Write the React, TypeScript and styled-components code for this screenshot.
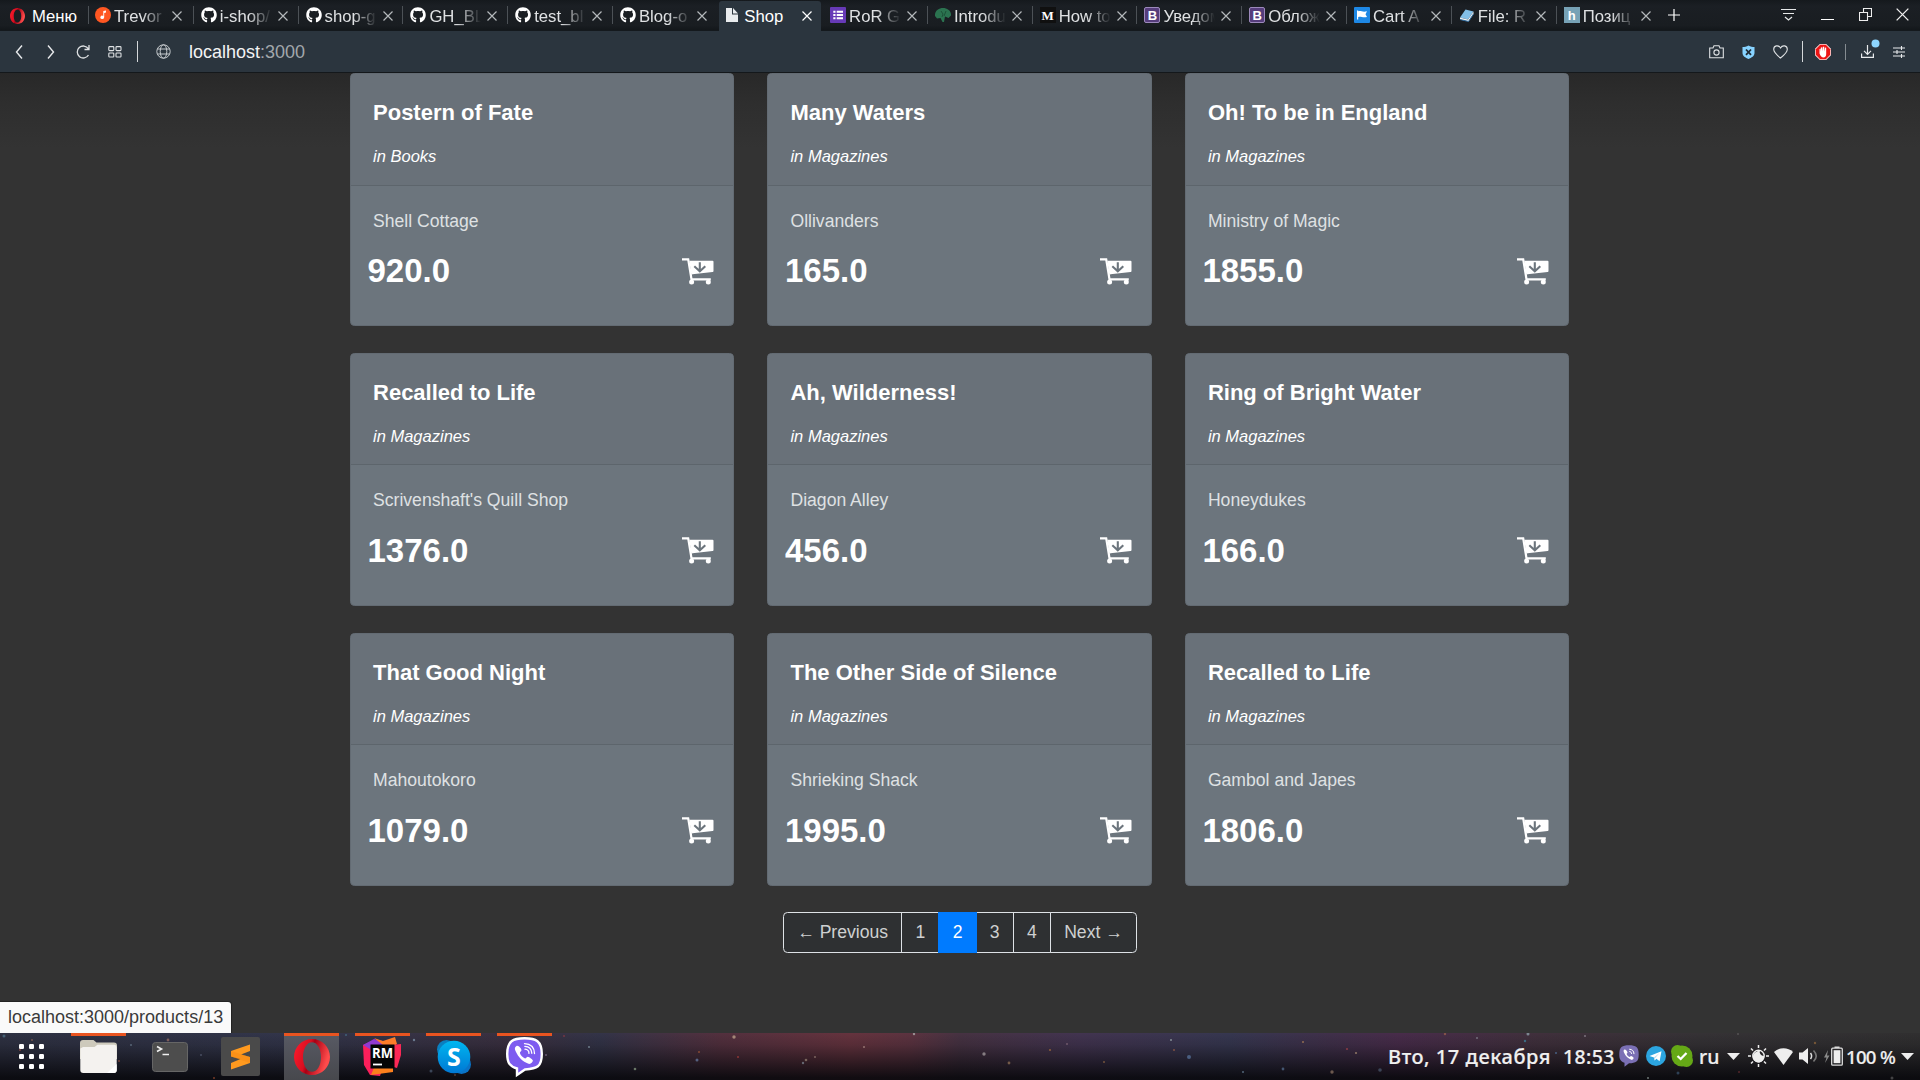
import React from 'react';
import styled, { createGlobalStyle, css } from 'styled-components';
import { FaGithub } from 'react-icons/fa';

const GlobalStyle = createGlobalStyle`
  *, *::before, *::after { box-sizing: border-box; }
  body {
    margin: 0;
    background: #333;
    font-family: "Liberation Sans", Arial, sans-serif;
    overflow: hidden;
  }
  svg { display: block; flex: none; }
`;

const Screen = styled.div`
  width: 1920px;
  height: 1080px;
  display: flex;
  flex-direction: column;
  overflow: hidden;
`;

/* ---------- tab strip ---------- */

const TabStrip = styled.div`
  height: 31px;
  flex: none;
  display: flex;
  background: linear-gradient(#15191d, #1b1f24 20%, #191d21 85%, #13171a);
  border-bottom: 1px solid #14191d;
  color: #dfe1e3;
  font-size: 16.7px;
  line-height: 33px;
`;

const MenuButton = styled.div`
  width: 88px;
  display: flex;
  align-items: center;
  padding-left: 10px;
  gap: 7px;
  color: #fff;
  height: 32px;
`;

const Tab = styled.div<{ $active?: boolean; $plain?: boolean; $first?: boolean }>`
  width: 104.8px;
  flex: none;
  display: flex;
  align-items: center;
  height: 31px;
  padding-left: ${p => (p.$first ? 6 : 7)}px;
  border-left: 1px solid transparent;
  border-image: linear-gradient(transparent 7px, ${p => (p.$plain ? 'transparent' : '#4c5156')} 7px, ${p => (p.$plain ? 'transparent' : '#4c5156')} 23px, transparent 23px) 1;
  ${p => p.$active && css`
    width: 101.8px;
    margin: 1px 1.5px 0 2px;
    height: 30px;
    padding: 0 0 1px 6.5px;
    border: 0;
    border-radius: 3px 3px 0 0;
    background: #2b353e;
    color: #fff;
  `}
`;

const Favicon = styled.span`
  width: 16px;
  height: 16px;
  flex: none;
  margin-top: -1px;
`;

const TabTitle = styled.span<{ $full?: boolean }>`
  width: 52px;
  margin-left: 3px;
  height: 31px;
  line-height: 33px;
  flex: none;
  overflow: hidden;
  white-space: nowrap;
  ${p => !p.$full && css`mask-image: linear-gradient(90deg, #000 55%, transparent 100%);`}
`;

const TabClose = styled.span`
  margin-left: 6px;
`;

const LetterIcon = styled.span<{ $bg: string; $serif?: boolean; $edge?: string }>`
  display: flex;
  align-items: center;
  justify-content: center;
  width: 16px;
  height: 16px;
  background: ${p => p.$bg};
  border: ${p => (p.$edge ? `1px solid ${p.$edge}` : '0')};
  border-radius: ${p => (p.$edge ? '2px' : '0')};
  color: #fff;
  font: bold 13px/15px ${p => (p.$serif ? '"Liberation Serif", serif' : '"Liberation Sans", sans-serif')};
`;

const NewTab = styled.div`
  width: 27px;
  display: flex;
  align-items: center;
  justify-content: center;
  height: 29px;
  margin-right: auto;
`;

const WindowButton = styled.div<{ $w: number }>`
  width: ${p => p.$w}px;
  height: 28px;
  display: flex;
  align-items: center;
  justify-content: center;
`;

/* ---------- address bar ---------- */

const Toolbar = styled.div`
  height: 42px;
  flex: none;
  display: flex;
  align-items: center;
  padding: 0 4px 0 3px;
  background: #2b353e;
  border-bottom: 1px solid #14181b;
  z-index: 1;
`;

const ToolSlot = styled.div<{ $w?: number }>`
  width: ${p => p.$w ?? 32}px;
  height: 22px;
  display: flex;
  align-items: center;
  justify-content: center;
`;

const ToolRule = styled.span<{ $h: number; $c?: string }>`
  width: 1px;
  height: ${p => p.$h}px;
  background: ${p => p.$c ?? '#d5d8da'};
`;

const Address = styled.div`
  flex: 1;
  margin-left: 6px;
  padding-top: 1px;
  font-size: 18px;
  color: #f2f3f4;
  span { color: #a2a7ab; }
`;

/* ---------- page ---------- */

const Page = styled.main`
  height: 960px;
  flex: none;
  display: flex;
  flex-direction: column;
  align-items: center;
  padding-top: 0.2px;
  background: linear-gradient(#282828, #2e2e2e 30px, #333 75px);
`;

const ProductGrid = styled.div`
  display: grid;
  grid-template-columns: repeat(3, 384.2px);
  grid-auto-rows: 253px;
  column-gap: 33.25px;
  row-gap: 26.7px;
  padding-right: 0.9px;
`;

const Card = styled.article`
  background: #6c757d;
  border: 1px solid #636b73;
  border-radius: 4.4px;
  overflow: hidden;
`;

const CardHeader = styled.header`
  height: 111.4px;
  background: #697179;
  border-bottom: 1px solid #5d656c;
  padding: 26px 22px 0;
  color: #fff;
`;

const Title = styled.h5`
  margin: 0;
  font-size: 22px;
  line-height: 26px;
  font-weight: bold;
`;

const Category = styled.p`
  margin: 18px 0 0;
  font-size: 16.5px;
  line-height: 25px;
  font-style: italic;
`;

const CardBody = styled.div`
  padding: 22.05px 19px 0 16.5px;
`;

const Maker = styled.p`
  margin: 0 0 0 5.5px;
  font-size: 17.6px;
  line-height: 26px;
  color: #dfe1e3;
`;

const PriceRow = styled.div`
  margin-top: 17.55px;
  height: 40px;
  display: flex;
  align-items: center;
  justify-content: space-between;
`;

const Price = styled.strong`
  font-size: 33px;
  line-height: 40px;
  color: #fff;
`;

const Pager = styled.nav`
  display: flex;
  margin-top: 26.4px;
  padding-left: 1px;
`;

const PageLink = styled.a<{ $active?: boolean }>`
  height: 41px;
  padding: 0 13.2px;
  margin-left: -1px;
  border: 1px solid ${p => (p.$active ? '#007bff' : '#dee2e6')};
  background: ${p => (p.$active ? '#007bff' : '#2e3032')};
  color: ${p => (p.$active ? '#fff' : '#ced0d1')};
  z-index: ${p => (p.$active ? 1 : 0)};
  font-size: 17.6px;
  line-height: 39px;
  white-space: nowrap;
  &:first-child { border-radius: 4.4px 0 0 4.4px; }
  &:last-child { border-radius: 0 4.4px 4.4px 0; }
`;

const LinkStatus = styled.div`
  position: absolute;
  left: 0;
  top: 1002px;
  width: 231px;
  height: 31px;
  padding-left: 8px;
  border-radius: 0 3px 0 0;
  box-shadow: 0 0 1px 1px #222;
  background: #fafafa;
  color: #3a3a3a;
  font-size: 18px;
  line-height: 30px;
`;

/* ---------- desktop panel ---------- */

const Panel = styled.footer`
  position: relative;
  height: 47px;
  flex: none;
  display: flex;
  z-index: 2;
  background:
    linear-gradient(rgba(8, 8, 12, 0), rgba(8, 8, 12, 0.15) 25%, rgba(8, 8, 12, 0.9) 95%),
    linear-gradient(90deg, #2e3142 0, #32354a 300px, #3b3040 520px, #333448 600px, #53303e 720px, #65333e 850px, #5c3340 910px, #463242 960px, #423450 1080px, #363750 1230px, #40304a 1330px, #482c4a 1400px, #40303c 1540px, #353235 1700px, #302f30 1920px);
`;

const StarField = styled.svg`
  position: absolute;
  inset: 0;
  opacity: 0.75;
`;

const DockItem = styled.div<{ $running?: boolean; $focused?: boolean; $w?: number }>`
  position: relative;
  width: ${p => p.$w ?? 55}px;
  margin-right: ${p => (p.$w ? 8 : 16)}px;
  display: flex;
  align-items: center;
  justify-content: center;
  padding-bottom: 3px;
  border-top: 3px solid ${p => (p.$running ? '#e95420' : 'transparent')};
  background: ${p => (p.$focused ? 'linear-gradient(#575963, #47484d)' : 'none')};
  background-clip: padding-box;
  svg { overflow: visible; }
`;

const Tray = styled.div`
  position: relative;
  margin-left: auto;
  padding-right: 6px;
  display: flex;
  align-items: center;
  color: #f0f0f0;
  font: 500 19.4px/47px "Noto Sans", "Open Sans", sans-serif;
`;

const TrayText = styled.span<{ $w: number; $gap: number; $ls?: number; $size?: number }>`
  width: ${p => p.$w}px;
  margin-right: ${p => p.$gap}px;
  letter-spacing: ${p => p.$ls ?? 0}px;
  font-size: ${p => p.$size ?? 19.4}px;
  white-space: nowrap;
  -webkit-text-stroke: 0.2px #f0f0f0;
`;

const TrayIcon = styled.span<{ $gap: number }>`
  margin-right: ${p => p.$gap}px;
  margin-top: -1px;
`;

/* ---------- drawings ---------- */

const Cross = ({ size = 10, color = '#b4b8bb', w = 1.2 }: { size?: number; color?: string; w?: number }) => (
  <svg width={size} height={size} viewBox="0 0 10 10" stroke={color} strokeWidth={w}>
    <path d="M.5 .5 9.5 9.5M9.5 .5 .5 9.5" />
  </svg>
);

const OperaMark = ({ w, h, id }: { w: number; h: number; id: string }) => (
  <svg width={w} height={h} viewBox="0 0 36 40" preserveAspectRatio="none">
    <defs>
      <linearGradient id={id} x1="0" y1="0" x2="1" y2="0.3">
        <stop offset="0" stopColor="#ff1b2d" />
        <stop offset=".45" stopColor="#d80f20" />
        <stop offset=".55" stopColor="#a70014" />
        <stop offset="1" stopColor="#ff4b4b" />
      </linearGradient>
    </defs>
    <path fill={`url(#${id})`} fillRule="evenodd" d="M18 0C8 0 0 9 0 20s8 20 18 20 18-9 18-20S28 0 18 0Zm0 3.500c5 0 9 7 9 16.500s-4 16.500-9 16.500S9 29.500 9 20 13 3.500 18 3.500Z" />
  </svg>
);

const CartIcon = () => (
  <svg width="32" height="27" viewBox="0 0 32 27">
    <path d="M0 1.300h6.200L9.500 21.300H28.800" fill="none" stroke="#fff" strokeWidth="2.200" />
    <path d="M7.300 2.800H30.500a1 1 0 0 1 1 1V13a1 1 0 0 1-.9 1L10.500 16.300 9.400 17Z" fill="#fff" />
    <path d="M17.800 4.300V13M12.300 8.300l5.500 5 5.500-5" fill="none" stroke="#6c757d" strokeWidth="2.100" />
    <circle cx="9.600" cy="24" r="2.500" fill="#fff" />
    <circle cx="26.300" cy="24" r="2.500" fill="#fff" />
  </svg>
);

type IconKind = 'music' | 'github' | 'page' | 'list' | 'tree' | 'medium' | 'bootstrap' | 'flag' | 'book' | 'habr';

const FaviconArt = ({ kind }: { kind: IconKind }) => {
  switch (kind) {
    case 'github':
      return <FaGithub size={16} color="#fff" />;
    case 'medium':
      return <LetterIcon $bg="#101010" $serif>M</LetterIcon>;
    case 'bootstrap':
      return <LetterIcon $bg="#563d7c" $edge="#9c89bb">B</LetterIcon>;
    case 'habr':
      return <LetterIcon $bg="#77a2b6">h</LetterIcon>;
    case 'music':
      return (
        <svg width="16" height="16" viewBox="0 0 16 16">
          <circle cx="8" cy="8" r="8" fill="#ff5722" />
          <path d="M8.300 4 11 3.500V5.500L9.200 5.900V10.300A1.900 1.700 0 1 1 8.300 8.900Z" fill="#fff" />
        </svg>
      );
    case 'page':
      return (
        <svg width="16" height="16" viewBox="0 0 16 16" fill="#e9ecee">
          <path d="M1 1H7V7.500H13V15H1Z" />
          <path d="M8 1 13 6.500H8Z" />
        </svg>
      );
    case 'list':
      return (
        <svg width="16" height="16" viewBox="0 0 16 16">
          <rect width="16" height="16" rx="1" fill="#673ab7" />
          <path d="M3.300 4.800h2.200M6.700 4.800H13M3.300 8h2.200M6.700 8H13M3.300 11.200h2.200M6.700 11.200H13" stroke="#fff" strokeWidth="2" />
        </svg>
      );
    case 'tree':
      return (
        <svg width="16" height="16" viewBox="0 0 16 16">
          <path d="M0 9C-.5 4 3.500 1 8 1s8.500 3 8 7.500L13.500 11 10 9.500 9 15H7.500L5.500 11 2 11.500Z" fill="#2b7350" />
          <path d="M6 4l2 3-1 3M11 4 9 9" stroke="#1d5138" fill="none" />
        </svg>
      );
    case 'flag':
      return (
        <svg width="16" height="16" viewBox="0 0 16 16">
          <rect width="16" height="16" rx="1" fill="#1e88e5" />
          <path d="M3 3.500h1.200V12.500H3ZM4.200 4.300c3 -.9 4 1.200 8.800 0l-1.500 3L13 10c-4.500 1-5.800-.8-8.800 0Z" fill="#fff" />
        </svg>
      );
    case 'book':
      return (
        <svg width="16" height="16" viewBox="0 0 16 16">
          <path d="M1 10.500 6.500 2.500 14.500 4.500 9 12.500Z" fill="#82bfe8" />
          <path d="M1 10.500 9 12.500 14.500 4.500V7L9.500 14.500 1 12.500Z" fill="#e8f0f5" />
          <path d="M1 12.500 9.500 14.500 14.500 7" fill="none" stroke="#2e6a9d" />
        </svg>
      );
  }
};

const FilesIcon = () => (
  <svg width="37" height="35" viewBox="0 0 37 35">
    <path d="M0 4a3 3 0 0 1 3-3H13.500l3 2.500H34a3 3 0 0 1 3 3V20H0Z" fill="#cdc9bb" />
    <path d="M.3 9.500 3 8H14.500L17.500 5.800H34a2.500 2.500 0 0 1 2.700 2.500V31a3 3 0 0 1-3 3H3.300a3 3 0 0 1-3-3Z" fill="#f4f2ef" />
    <path d="M27 34 36.700 25V31a3 3 0 0 1-3 3Z" fill="#fff" />
  </svg>
);

const TerminalIcon = () => (
  <svg width="36" height="30" viewBox="0 0 36 30">
    <rect x=".5" y=".5" width="35" height="29" rx="3" fill="#4d4d4d" stroke="#666" />
    <path d="M5 4.500 9.500 7 5 9.500M10.500 12.500H17" fill="none" stroke="#f0f0f0" strokeWidth="1.600" />
  </svg>
);

const SublimeIcon = () => (
  <svg width="39" height="39" viewBox="0 0 39 39">
    <rect width="39" height="39" rx="2" fill="#4a4a4a" />
    <path d="M10 14 29 7.500V14L20 17.500 29 20V26L10 32.500V26L19.500 22 10 19.500Z" fill="#ff9a1f" />
    <path d="M10 19.500V14L29 20V26Z" fill="#f58a12" opacity=".55" />
  </svg>
);

const RubyMineIcon = () => (
  <svg width="39" height="39" viewBox="0 0 39 39">
    <path d="M0 8 11 3 27 9 17 39 7 38 1 28Z" fill="#fc1f5b" />
    <path d="M0 8 11 2 24 5 12 15Z" fill="#9039d0" />
    <path d="M11 1 20 4 32 0 34 7 25 12 20 8Z" fill="#fc7d2a" />
    <path d="M29 8 38 7V18L34 31 27 29Z" fill="#fb2856" />
    <path d="M8 38 12 28 30 31V35Z" fill="#fc801d" />
    <rect x="7.500" y="7.500" width="24" height="24" fill="#050505" />
    <text x="9" y="20.500" fill="#fff" fontFamily="Open Sans, sans-serif" fontWeight="700" fontSize="14.5" textLength="21" lengthAdjust="spacingAndGlyphs">RM</text>
    <path d="M10 27.500h9" stroke="#fff" strokeWidth="1.800" />
  </svg>
);

const SkypeIcon = () => (
  <svg width="34" height="34" viewBox="0 0 34 34">
    <defs>
      <linearGradient id="skypeBlue" x1="0" y1="0" x2="0" y2="1">
        <stop offset="0" stopColor="#00b7f0" />
        <stop offset="1" stopColor="#0078d4" />
      </linearGradient>
    </defs>
    <circle cx="9.500" cy="9.500" r="9.500" fill="#0a7fc0" />
    <circle cx="24.500" cy="24.500" r="9.500" fill="#0a74c8" />
    <circle cx="17" cy="17" r="16.300" fill="url(#skypeBlue)" />
    <text x="17" y="26" textAnchor="middle" fill="#fff" fontFamily="Open Sans, sans-serif" fontWeight="700" fontSize="25">S</text>
  </svg>
);

const ViberIcon = () => (
  <svg width="37" height="39" viewBox="0 0 37 39">
    <path d="M18.500 1.200C30 1.200 35.800 4 35.800 17S31 31.500 19 32.500L11 38V31.500C4 29.500 1.200 26 1.200 17 1.200 4 7 1.200 18.500 1.200Z" fill="#7d5cf0" stroke="#fff" strokeWidth="2.400" />
    <path d="M10.500 9C8.500 10 8.500 12 9.500 14c3 6.500 7 10.500 13 12.800 2.300.6 4-1.300 4.400-3 .2-1-3.800-4-5-4s-1.600 1.800-2.800 1.600c-2.300-.8-4.600-3-5.200-5.400 0-1.400 1.700-1.500 1.600-2.900C15.300 11.700 12.500 8 10.500 9Z" fill="#fff" />
    <path d="M19 12.200c2.600.2 3.900 1.700 4 4.200M18.800 9.300c4.300.2 6.800 2.800 7 7M18.500 6.600C24.500 6.800 28.300 10.500 28.500 16.500" fill="none" stroke="#fff" strokeWidth="1.300" strokeLinecap="round" />
  </svg>
);

const Caret = ({ w = 13 }: { w?: number }) => (
  <svg width={w} height="7" viewBox="0 0 12 7" preserveAspectRatio="none"><path d="M0 0H12L6 7Z" fill="#eee" /></svg>
);

/* ---------- data ---------- */

const tabs: { icon: IconKind; title: string; active?: boolean; plain?: boolean }[] = [
  { icon: 'music', title: 'Trevor' },
  { icon: 'github', title: 'i-shop/' },
  { icon: 'github', title: 'shop-g' },
  { icon: 'github', title: 'GH_BL' },
  { icon: 'github', title: 'test_bl' },
  { icon: 'github', title: 'Blog-o' },
  { icon: 'page', title: 'Shop', active: true },
  { icon: 'list', title: 'RoR G', plain: true },
  { icon: 'tree', title: 'Introdu' },
  { icon: 'medium', title: 'How to' },
  { icon: 'bootstrap', title: 'Уведом' },
  { icon: 'bootstrap', title: 'Облож' },
  { icon: 'flag', title: 'Cart A' },
  { icon: 'book', title: 'File: R' },
  { icon: 'habr', title: 'Позиц' },
];

const products = [
  ['Postern of Fate', 'Books', 'Shell Cottage', '920.0'],
  ['Many Waters', 'Magazines', 'Ollivanders', '165.0'],
  ['Oh! To be in England', 'Magazines', 'Ministry of Magic', '1855.0'],
  ['Recalled to Life', 'Magazines', "Scrivenshaft's Quill Shop", '1376.0'],
  ['Ah, Wilderness!', 'Magazines', 'Diagon Alley', '456.0'],
  ['Ring of Bright Water', 'Magazines', 'Honeydukes', '166.0'],
  ['That Good Night', 'Magazines', 'Mahoutokoro', '1079.0'],
  ['The Other Side of Silence', 'Magazines', 'Shrieking Shack', '1995.0'],
  ['Recalled to Life', 'Magazines', 'Gambol and Japes', '1806.0'],
];

const stars: [number, number, number, string][] = [
  [4, 3, 1.5, '#4d7288'], [32, 7, 1, '#8a6152'], [20, 17, 1, '#9a4a45'], [131, 12, 1, '#66798a'], [168, 7, 1.4, '#9a6d62'],
  [119, 28, 1, '#8b4a3c'], [201, 22, 1, '#555b70'], [214, 45, 1, '#9a4a2c'], [346, 2, 1, '#46708a'], [414, 7, 1.2, '#7d93a8'],
  [431, 38, 1.5, '#48566c'], [455, 42, 1, '#664436'], [546, 22, 1, '#7c6a8a'], [564, 3, 1, '#8a3944'], [589, 14, 1, '#8397a5'],
  [635, 36, 1.3, '#84977f'], [697, 27, 1.5, '#64789f'], [699, 19, 1, '#a05634'], [734, 4, 1.7, '#c0a48c'], [738, 24, 1, '#a83c38'],
  [803, 30, 1.2, '#77808c'], [806, 27, 1.3, '#917d70'], [815, 24, 1, '#907a70'], [864, 14, 1, '#ad8b84'], [914, 1, 1.2, '#b1afae'],
  [984, 21, 1.7, '#a29b9d'], [1009, 30, 1.4, '#8f7054'], [1050, 17, 1.1, '#a56d3b'], [1067, 11, 1, '#806677'], [1104, 29, 1, '#8e6541'],
  [1171, 7, 1, '#9eacae'], [1174, 17, 1, '#9a5f44'], [1189, 24, 2, '#57729a'], [1243, 39, 1, '#68829a'], [1283, 36, 1.4, '#526b8c'],
  [1303, 9, 1, '#b08256'], [1332, 39, 1.7, '#8a7160'], [1347, 16, 1.1, '#a24147'], [1356, 20, 1.1, '#a98d72'], [1380, 37, 1.8, '#48566b'],
  [1445, 1, 1.2, '#99604c'], [1477, 5, 1, '#858590'], [1528, 1, 1.5, '#91a3ad'], [1525, 8, 1.2, '#3d809b'], [1585, 3, 1, '#908894'],
  [1556, 20, 1, '#5175a0'], [1648, 45, 1, '#8d9994'], [1678, 40, 1.5, '#38516b'], [1738, 1, 1, '#605e5e'], [1815, 10, 1.2, '#8c643a'],
  [1892, 45, 1.5, '#555'], [1739, 39, 1, '#6a2d32'],
];

export default function App() {
  return (
    <Screen>
      <GlobalStyle />
      <TabStrip>
        <MenuButton>
          <OperaMark w={15} h={16} id="operaSmall" />
          Меню
        </MenuButton>
        {tabs.map((t, i) => (
          <Tab key={i} $active={t.active} $plain={t.plain} $first={i === 0}>
            <Favicon><FaviconArt kind={t.icon} /></Favicon>
            <TabTitle $full={t.active}>{t.title}</TabTitle>
            <TabClose><Cross color={t.active ? '#fff' : undefined} /></TabClose>
          </Tab>
        ))}
        <NewTab>
          <svg width="12" height="12" stroke="#fff" strokeWidth="1.200"><path d="M6 0V12M0 6H12" /></svg>
        </NewTab>
        <WindowButton $w={39}>
          <svg width="15" height="14" fill="none" stroke="#e6e8e9" strokeWidth="1.200"><path d="M0 2.500H15M2 6.500H13M4 10l3.500 3L11 10" /></svg>
        </WindowButton>
        <WindowButton $w={38}>
          <svg width="13" height="14" stroke="#fff"><path d="M0 12.500H13" /></svg>
        </WindowButton>
        <WindowButton $w={38}>
          <svg width="13" height="13" fill="none" stroke="#eee" strokeWidth="1.100"><path d="M.5 4.500H8.500V12.500H.5ZM4.500 4V.5H12.500V8.500H9" /></svg>
        </WindowButton>
        <WindowButton $w={36}><Cross size={13} color="#f0f0f0" w={1} /></WindowButton>
      </TabStrip>

      <Toolbar>
        <ToolSlot>
          <svg width="8" height="14" fill="none" stroke="#e8eaec" strokeWidth="1.400"><path d="M7 .5 1.500 7 7 13.500" /></svg>
        </ToolSlot>
        <ToolSlot>
          <svg width="8" height="14" fill="none" stroke="#e8eaec" strokeWidth="1.400"><path d="M1 .5 6.500 7 1 13.500" /></svg>
        </ToolSlot>
        <ToolSlot>
          <svg width="14" height="14" fill="none" stroke="#dfe2e4" strokeWidth="1.300"><path d="M12.300 3.700A6 6 0 1 0 12.500 10M13 0V4.500H8.500" /></svg>
        </ToolSlot>
        <ToolSlot>
          <svg width="14" height="12" fill="none" stroke="#dfe2e4" strokeWidth="1.100">
            <rect x=".8" y=".6" width="5" height="4" rx=".8" /><rect x="8" y=".6" width="5" height="4" rx=".8" />
            <rect x=".8" y="7" width="5" height="4" rx=".8" /><rect x="8" y="7" width="5" height="4" rx=".8" />
          </svg>
        </ToolSlot>
        <ToolSlot $w={12}><ToolRule $h={21} /></ToolSlot>
        <ToolSlot $w={40}>
          <svg width="15" height="15" fill="none" stroke="#c5cacd" strokeWidth="1">
            <circle cx="7.500" cy="7.500" r="6.700" /><ellipse cx="7.500" cy="7.500" rx="3.300" ry="6.700" /><path d="M1.500 5H13.500M1.500 10H13.500" />
          </svg>
        </ToolSlot>
        <Address>localhost<span>:3000</span></Address>
        <ToolSlot>
          <svg width="15" height="14" fill="none" stroke="#dfe2e4" strokeWidth="1.100">
            <path d="M.7 3H4L5 .8H10L11 3H14.300V12.800H.7Z" /><circle cx="7.500" cy="7.500" r="2.600" />
          </svg>
        </ToolSlot>
        <ToolSlot>
          <svg width="13" height="14" viewBox="0 0 13 14">
            <path d="M6.500 .5C8.500 1.800 10.500 2 12.500 2V8c0 3-3 4.800-6 6C3.500 12.800.5 11 .5 8V2C2.500 2 4.500 1.800 6.500.5Z" fill="#87d3ff" />
            <path d="M4 4.500 9 9.800M9 4.500 4 9.800" stroke="#1f2b35" strokeWidth="1.800" />
          </svg>
        </ToolSlot>
        <ToolSlot>
          <svg width="15" height="14" fill="none" stroke="#dfe2e4" strokeWidth="1.100"><path d="M7.500 13C3 9.500.7 7.300.7 4.300.7 .5 5.500-.5 7.500 3 9.500-.5 14.300.5 14.300 4.300 14.300 7.300 12 9.500 7.500 13Z" /></svg>
        </ToolSlot>
        <ToolSlot $w={12}><ToolRule $h={21} /></ToolSlot>
        <ToolSlot $w={30}>
          <svg width="16" height="16" viewBox="0 0 16 16">
            <path d="M4.800 0H11.200L16 4.800V11.200L11.200 16H4.800L0 11.200V4.800Z" fill="#ffdcdc" />
            <path d="M5.200 .8H10.800L15.200 5.200V10.800L10.800 15.200H5.200L.8 10.800V5.200Z" fill="#ed1515" />
            <path d="M4.500 9.500V5l1-.3V8l.4-4.500 1.300-.3.4 4 .3-4.500H9.200l.3 4.700.5-3.900 1.200.3V10c0 2-1 3.500-2.700 3.500S5.500 12 4.500 9.500Z" fill="#fff" />
          </svg>
        </ToolSlot>
        <ToolSlot $w={14}><ToolRule $h={16} $c="#858c91" /></ToolSlot>
        <ToolSlot $w={30}>
          <svg width="13" height="13" fill="none" stroke="#e8eaec" strokeWidth="1.200" overflow="visible">
            <path d="M.6 8.500V12.400H12.400V8.500M6.500 0V9M3 5.800 6.500 9.300 10 5.800" />
            <circle cx="14.500" cy="-1.500" r="4" fill="#8ed6ff" stroke="none" />
          </svg>
        </ToolSlot>
        <ToolSlot $w={34}>
          <svg width="12" height="12" stroke="#e8eaec" strokeWidth="1.100"><path d="M0 2H12M0 6H12M0 10H12M8.500 0V4M4 4V8M8.500 8V12" /></svg>
        </ToolSlot>
      </Toolbar>

      <Page>
        <ProductGrid>
          {products.map(([title, category, maker, price], i) => (
            <Card key={i}>
              <CardHeader>
                <Title>{title}</Title>
                <Category>in {category}</Category>
              </CardHeader>
              <CardBody>
                <Maker>{maker}</Maker>
                <PriceRow>
                  <Price>{price}</Price>
                  <CartIcon />
                </PriceRow>
              </CardBody>
            </Card>
          ))}
        </ProductGrid>
        <Pager>
          {['← Previous', '1', '2', '3', '4', 'Next →'].map(label => (
            <PageLink key={label} $active={label === '2'}>{label}</PageLink>
          ))}
        </Pager>
      </Page>
      <LinkStatus>localhost:3000/products/13</LinkStatus>

      <Panel>
        <StarField width="1920" height="47">
          {stars.map(([x, y, r, c], i) => <circle key={i} cx={x} cy={y} r={r} fill={c} />)}
        </StarField>
        <DockItem $w={63}>
          <svg width="25" height="25" fill="#fff">
            {[0, 1, 2].flatMap(r => [0, 1, 2].map(c => <rect key={`${r}${c}`} x={c * 10} y={r * 10} width="5" height="5" rx="1.200" />))}
          </svg>
        </DockItem>
        <DockItem $running><FilesIcon /></DockItem>
        <DockItem><TerminalIcon /></DockItem>
        <DockItem><SublimeIcon /></DockItem>
        <DockItem $running $focused><OperaMark w={36} h={36} id="operaLarge" /></DockItem>
        <DockItem $running><RubyMineIcon /></DockItem>
        <DockItem $running><SkypeIcon /></DockItem>
        <DockItem $running><ViberIcon /></DockItem>
        <Tray>
          <TrayText $w={163} $gap={12} $ls={0.55} $size={20}>Вто, 17 декабря</TrayText>
          <TrayText $w={52} $gap={4} $ls={0.4}>18:53</TrayText>
          <TrayIcon $gap={7}>
            <svg width="20" height="22" viewBox="0 0 20 22">
              <path d="M10 .3C17 .3 19.700 2 19.700 9.500S17 18 10 18.300L5.500 21.800V17.800C1.500 16.500.3 14 .3 9.500.3 2 3 .3 10 .3Z" fill="#7b70b5" />
              <path d="M5.500 4.500C4.300 5 4.500 6.500 5 7.500c1.500 3.500 4 6 7.300 7.300 1.300.4 2.200-.8 2.400-1.700.1-.6-2-2-2.700-2s-.9 1-1.500.9C9.200 11.500 8 10.300 7.600 9c0-.8.9-.8.9-1.600C8.300 6.300 6.600 4.100 5.500 4.500Z" fill="#fff" />
              <path d="M10.300 6.500c1.500.1 2.200 1 2.300 2.400M10.200 4.200c3 .2 4.700 1.700 4.800 4.900" fill="none" stroke="#fff" strokeWidth="1" />
            </svg>
          </TrayIcon>
          <TrayIcon $gap={5}>
            <svg width="20" height="20" viewBox="0 0 20 20">
              <circle cx="10" cy="10" r="10" fill="#2ca5e0" />
              <path d="M3.500 10 15.500 5.200 13.600 15.200 10.400 12.800 8.600 14.600 8 11.600Z" fill="#fff" />
              <path d="M8 11.600 13.500 7 9 12.300 8.600 14.600Z" fill="#b9d8ea" />
            </svg>
          </TrayIcon>
          <TrayIcon $gap={6}>
            <svg width="22" height="22" viewBox="0 0 22 22" fill="#65a816">
              <circle cx="6.500" cy="6.500" r="6.500" /><circle cx="15.500" cy="15.500" r="6.500" /><circle cx="11" cy="11" r="10.500" />
              <path d="M6.500 11 9.700 14 15.500 8" fill="none" stroke="#fff" strokeWidth="2.300" />
            </svg>
          </TrayIcon>
          <TrayText $w={20} $gap={8}>ru</TrayText>
          <TrayIcon $gap={8}><Caret /></TrayIcon>
          <TrayIcon $gap={5}>
            <svg width="21" height="22" viewBox="0 0 21 22" fill="none" stroke="#eee">
              <circle cx="10.500" cy="11" r="5.700" strokeWidth="1.400" />
              <path d="M12 5.500A4 4 0 0 0 16 11 5.600 5.600 0 1 1 9 6.500 4 4 0 0 1 12 5.500Z" fill="#eee" stroke="none" />
              <path d="M10.500 0V3M10.500 19V22M0 11H3M18 11H21M3 3.500 5 5.500M18 3.500 16 5.500M3 18.500 5 16.500M18 18.500 16 16.500" strokeWidth="1.500" />
            </svg>
          </TrayIcon>
          <TrayIcon $gap={6}>
            <svg width="19" height="17" viewBox="0 0 19 17"><path d="M0 4C5-1 14-1 19 4L9.500 17Z" fill="#eee" /></svg>
          </TrayIcon>
          <TrayIcon $gap={6}>
            <svg width="19" height="18" viewBox="0 0 19 18">
              <path d="M0 5.500H3.500L9 1V17L3.500 12.500H0Z" fill="#eee" />
              <path d="M11.500 6c1.500 2 1.500 4 0 6" fill="none" stroke="#ddd" strokeWidth="1.500" />
              <path d="M14.500 3.500c3.500 3.500 3.500 7.500 0 11" fill="none" stroke="#777" strokeWidth="1.600" />
            </svg>
          </TrayIcon>
          <TrayIcon $gap={3}>
            <svg width="19" height="20" viewBox="0 0 19 20">
              <path d="M4 4 0 11.500H2.500L1 17 5.500 9.500H3Z" fill="#8a8a8a" />
              <rect x="7.700" y="2.200" width="10.600" height="17" rx="1" fill="none" stroke="#ddd" strokeWidth="1.300" />
              <rect x="9.600" y="4.200" width="6.800" height="13" fill="#eee" /><path d="M10.500 0.500H15.500V2H10.500Z" fill="#ddd" />
            </svg>
          </TrayIcon>
          <TrayText $w={49} $gap={6} $ls={-0.7} $size={18.6}>100 %</TrayText>
          <TrayIcon $gap={0}><Caret /></TrayIcon>
        </Tray>
      </Panel>
    </Screen>
  );
}
